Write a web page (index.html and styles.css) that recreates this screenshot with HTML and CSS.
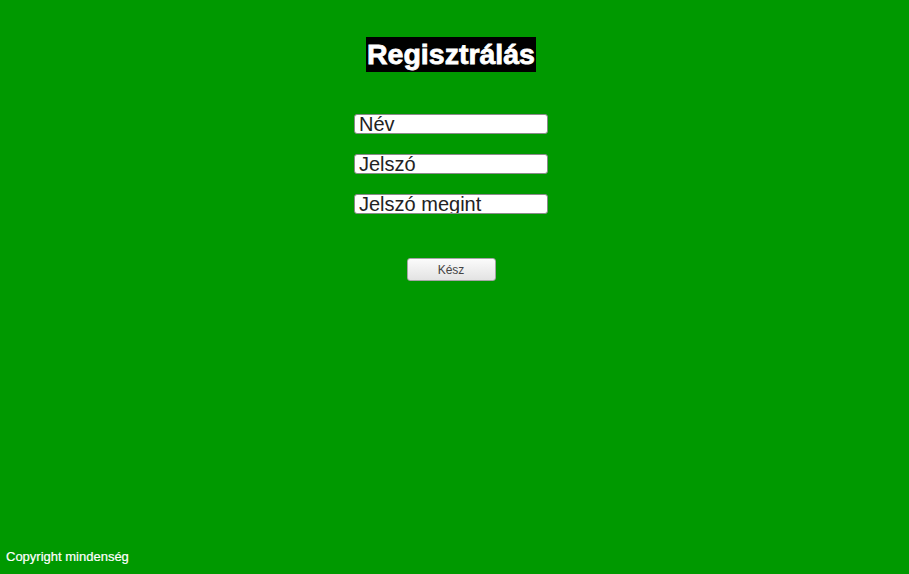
FILE: index.html
```html
<!DOCTYPE html>
<html lang="hu">
<head>
<meta charset="utf-8">
<title>Regisztrálás</title>
<link rel="stylesheet" href="styles.css">
</head>
<body>
<main class="page">
  <h1 class="title">Regisztrálás</h1>
  <form class="form">
    <input class="field" type="text" value="Név">
    <input class="field" type="text" value="Jelszó">
    <input class="field" type="text" value="Jelszó megint">
    <button class="btn" type="button">Kész</button>
  </form>
</main>
<footer class="footer">Copyright mindenség</footer>
</body>
</html>
```
FILE: styles.css
```css
html, body {
  margin: 0;
  height: 100%;
}
body {
  background: #009900;
  font-family: "Liberation Sans", Arial, sans-serif;
  display: flex;
  flex-direction: column;
  height: 574px;
  overflow: hidden;
}
.page {
  flex: 1;
  display: flex;
  flex-direction: column;
  align-items: center;
  padding-right: 7px;
}
.title {
  margin: 37px 0 0 0;
  background: #000;
  color: #fff;
  font-size: 28.5px;
  font-weight: bold;
  line-height: 35px;
  height: 35px;
  padding: 0 1px;
  -webkit-text-stroke: 0.8px #fff;
}
.form {
  margin-top: 42px;
  display: flex;
  flex-direction: column;
  align-items: center;
  gap: 20px;
}
.field {
  box-sizing: border-box;
  width: 194px;
  height: 20px;
  margin: 0;
  padding: 0 4px;
  border: 1px solid #8a8a8a;
  border-radius: 3px;
  background: #fff;
  color: #222;
  font-family: "Liberation Sans", Arial, sans-serif;
  font-size: 20px;
  line-height: 18px;
}
.btn {
  margin-top: 24px;
  box-sizing: border-box;
  width: 89px;
  height: 23px;
  border: 1px solid #a5a5a5;
  border-radius: 3px;
  background: linear-gradient(#fbfbfb, #e3e3e3);
  color: #444;
  font-family: "Liberation Sans", Arial, sans-serif;
  font-size: 12px;
  padding: 0;
}
.footer {
  color: #fff;
  font-size: 13px;
  padding: 0 6px 10px;
  line-height: 15px;
  -webkit-text-stroke: 0.2px #fff;
}
```
